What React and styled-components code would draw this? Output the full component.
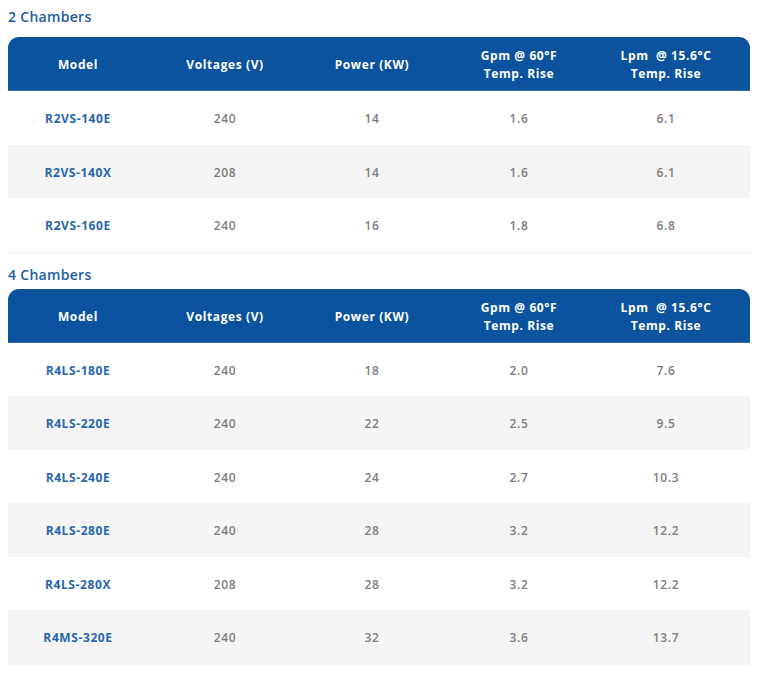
import React from "react";
import styled, { createGlobalStyle } from "styled-components";

const Global = createGlobalStyle`
  html, body { margin: 0; padding: 0; background: #ffffff; }
  body { padding: 8px; font-family: "Open Sans", "Liberation Sans", sans-serif; }
`;

const Page = styled.div`
  width: 742px;
  display: flex;
  flex-direction: column;
`;

const Heading = styled.h3`
  margin: ${(p) => (p.$first ? "1px 0 12px" : "14px 0 6px")};
  font-size: 14px;
  line-height: 16px;
  font-weight: 600;
  letter-spacing: 0.3px;
  color: #1d5ca3;
`;

const Table = styled.div`
  display: flex;
  flex-direction: column;
  border-radius: 11px 11px 0 0;
  overflow: hidden;
`;

const HeaderRow = styled.div`
  display: grid;
  grid-template-columns: repeat(5, 147px) 7px;
  height: 54px;
  background: #0b539e;
  border-bottom: 1px solid #3a72b4;
  box-sizing: border-box;
`;

const HeadCell = styled.div`
  display: flex;
  align-items: center;
  justify-content: center;
  text-align: center;
  padding: 3px 7px 0 0;
  color: #ffffff;
  font-size: 12px;
  line-height: 18px;
  font-weight: 700;
  letter-spacing: 0.6px;
  white-space: pre;
`;

const Body = styled.div`
  display: flex;
  flex-direction: column;
  border: 1px solid #efefef;
  border-top: none;
`;

const Row = styled.div`
  display: grid;
  grid-template-columns: repeat(5, 147px) 1fr;
  height: 53.5px;
  background: ${(p) => (p.$alt ? "#f5f5f5" : "#ffffff")};
  margin: 0 -1px;
`;

const Cell = styled.div`
  display: flex;
  align-items: center;
  justify-content: center;
  padding: 2px 7px 0 0;
  font-size: 12px;
  letter-spacing: 0.6px;
  font-weight: ${(p) => (p.$model ? 700 : 600)};
  color: ${(p) => (p.$model ? "#2767ae" : "#7d7d7d")};
`;

const headers = [
  "Model",
  "Voltages (V)",
  "Power (KW)",
  "Gpm @ 60°F\nTemp. Rise",
  "Lpm  @ 15.6°C\nTemp. Rise",
];

const two = [
  ["R2VS-140E", "240", "14", "1.6", "6.1"],
  ["R2VS-140X", "208", "14", "1.6", "6.1"],
  ["R2VS-160E", "240", "16", "1.8", "6.8"],
];

const four = [
  ["R4LS-180E", "240", "18", "2.0", "7.6"],
  ["R4LS-220E", "240", "22", "2.5", "9.5"],
  ["R4LS-240E", "240", "24", "2.7", "10.3"],
  ["R4LS-280E", "240", "28", "3.2", "12.2"],
  ["R4LS-280X", "208", "28", "3.2", "12.2"],
  ["R4MS-320E", "240", "32", "3.6", "13.7"],
];

function SpecTable({ rows }) {
  return (
    <Table>
      <HeaderRow>
        {headers.map((h) => (
          <HeadCell key={h}>{h}</HeadCell>
        ))}
      </HeaderRow>
      <Body>
        {rows.map((r, i) => (
          <Row key={r[0]} $alt={i % 2 === 1}>
            {r.map((c, j) => (
              <Cell key={j} $model={j === 0}>
                {c}
              </Cell>
            ))}
          </Row>
        ))}
      </Body>
    </Table>
  );
}

export default function App() {
  return (
    <>
      <Global />
      <Page>
        <Heading $first>2 Chambers</Heading>
        <SpecTable rows={two} />
        <Heading>4 Chambers</Heading>
        <SpecTable rows={four} />
      </Page>
    </>
  );
}
